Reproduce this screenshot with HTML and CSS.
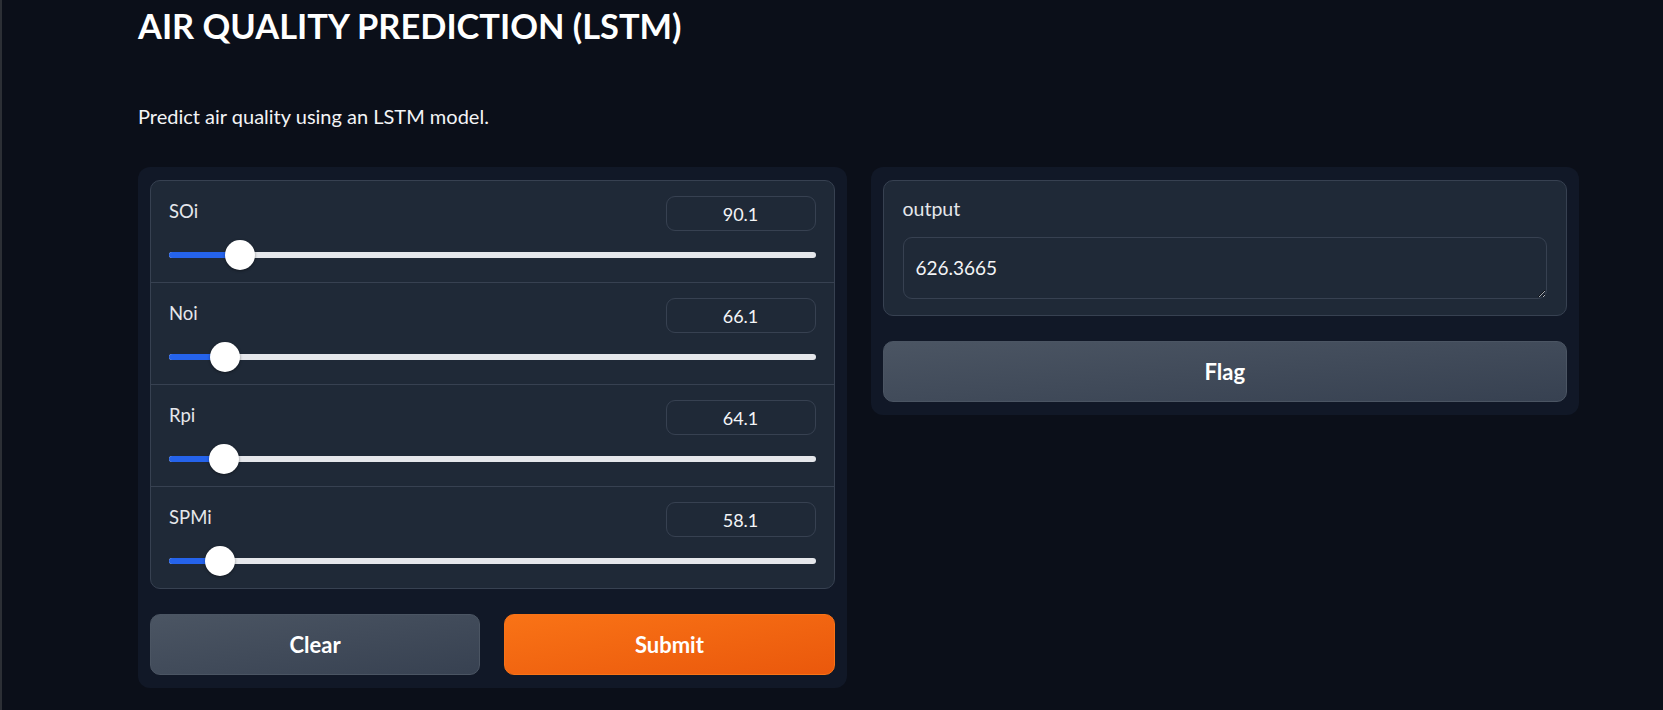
FILE: index.html
```html
<!DOCTYPE html>
<html lang="en">
<head>
<meta charset="utf-8">
<title>Air Quality Prediction (LSTM)</title>
<link rel="stylesheet" href="styles.css">
</head>
<body>
<div class="app">
  <h1 class="title">AIR QUALITY PREDICTION (LSTM)</h1>
  <p class="desc">Predict air quality using an LSTM model.</p>
  <div class="row">
    <div class="panel">
      <div class="block sliders">
        <div class="slider">
          <div class="slider-head"><span class="label">SOi</span><div class="num">90.1</div></div>
          <div class="track-wrap"><div class="track"></div><div class="fill" style="width:calc(15px + (100% - 30px) * 0.0901)"></div><div class="thumb" style="left:calc((100% - 30px) * 0.0901)"></div></div>
        </div>
        <div class="slider">
          <div class="slider-head"><span class="label">Noi</span><div class="num">66.1</div></div>
          <div class="track-wrap"><div class="track"></div><div class="fill" style="width:calc(15px + (100% - 30px) * 0.0661)"></div><div class="thumb" style="left:calc((100% - 30px) * 0.0661)"></div></div>
        </div>
        <div class="slider">
          <div class="slider-head"><span class="label">Rpi</span><div class="num">64.1</div></div>
          <div class="track-wrap"><div class="track"></div><div class="fill" style="width:calc(15px + (100% - 30px) * 0.0641)"></div><div class="thumb" style="left:calc((100% - 30px) * 0.0641)"></div></div>
        </div>
        <div class="slider">
          <div class="slider-head"><span class="label">SPMi</span><div class="num">58.1</div></div>
          <div class="track-wrap"><div class="track"></div><div class="fill" style="width:calc(15px + (100% - 30px) * 0.0581)"></div><div class="thumb" style="left:calc((100% - 30px) * 0.0581)"></div></div>
        </div>
      </div>
      <div class="btn-row">
        <button class="btn btn-secondary">Clear</button>
        <button class="btn btn-primary">Submit</button>
      </div>
    </div>
    <div class="panel">
      <div class="block output">
        <span class="label">output</span>
        <textarea class="out-text" rows="1" readonly>626.3665</textarea>
      </div>
      <button class="btn btn-secondary btn-full">Flag</button>
    </div>
  </div>
</div>
</body>
</html>
```
FILE: styles.css
```css
* { box-sizing: border-box; }
html, body { margin: 0; padding: 0; }
body {
  background: #0b0f19;
  border-left: 2px solid #2c2f35;
  height: 710px;
  overflow: hidden;
  font-family: Lato, "Noto Sans", sans-serif;
  color: #f3f4f6;
}
.app {
  padding-left: 136px;
  width: 1577px;
}
.title {
  margin: 0;
  padding-top: 4px;
  font-size: 34.4px;
  line-height: 44px;
  font-weight: 700;
  color: #ffffff;
}
.desc {
  margin: 55px 0 0;
  font-size: 20px;
  line-height: 26px;
  color: #f3f4f6;
}
.row {
  display: flex;
  gap: 24px;
  margin-top: 38px;
  align-items: flex-start;
}
.panel {
  flex: 1;
  background: #111827;
  border-radius: 12px;
  padding: 13px 12px;
  display: flex;
  flex-direction: column;
  gap: 25px;
}
.block {
  background: #1f2937;
  border: 1px solid #374151;
  border-radius: 10px;
}
.slider {
  height: 102px;
  padding: 15px 18px 0;
  border-bottom: 1px solid #374151;
}
.slider:last-child { border-bottom: none; height: 101px; }
.slider-head {
  display: flex;
  justify-content: space-between;
  align-items: center;
  height: 35px;
}
.slider-head .label { margin-top: -6px; }
.label {
  font-size: 18.5px;
  color: #e5e7eb;
}
.num {
  width: 150px;
  height: 35px;
  border: 1px solid #374151;
  border-radius: 9px;
  display: flex;
  align-items: center;
  justify-content: center;
  font-size: 18px;
  color: #f3f4f6;
}
.track-wrap {
  position: relative;
  height: 30px;
  margin-top: 9px;
}
.track {
  position: absolute;
  left: 0; right: 0; top: 12px;
  height: 6px;
  border-radius: 3px;
  background: #e5e7eb;
}
.fill {
  position: absolute;
  left: 0; top: 12px;
  height: 6px;
  border-radius: 3px 0 0 3px;
  background: #2563eb;
}
.thumb {
  position: absolute;
  top: 0;
  width: 30px;
  height: 30px;
  border-radius: 50%;
  background: #ffffff;
  box-shadow: 0 1px 3px rgba(0,0,0,0.4);
}
.btn-row {
  display: flex;
  gap: 24px;
}
.btn {
  flex: 1;
  height: 61px;
  border-radius: 10px;
  font-family: Lato, "Noto Sans", sans-serif;
  font-size: 22px;
  font-weight: 700;
  color: #ffffff;
  cursor: pointer;
}
.btn-full { flex: none; width: 100%; }
.btn-secondary {
  background: linear-gradient(to bottom right, #4b5563, #374151);
  border: 1px solid #4b5563;
}
.btn-primary {
  background: linear-gradient(to bottom right, #f97316, #ea580c);
  border: 1px solid #f97316;
}
.output {
  display: flex;
  flex-direction: column;
  padding: 16px 19px 16px;
  height: 136px;
}
.output .label { line-height: 24px; font-size: 19.5px; }
.out-text {
  margin-top: 16px;
  height: 64px;
  width: 100%;
  background: #1f2937;
  border: 1px solid #374151;
  border-radius: 9px;
  color: #f3f4f6;
  font-family: Lato, "Noto Sans", sans-serif;
  font-size: 19px;
  padding: 18px 12px;
  color-scheme: dark;
  resize: vertical;
  outline: none;
}
```
